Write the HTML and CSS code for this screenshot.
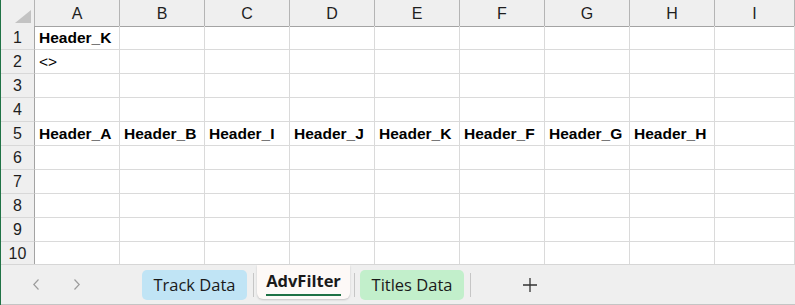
FILE: index.html
```html
<!DOCTYPE html>
<html>
<head>
  <meta http-equiv="Content-type" content="text/html; charset=utf-8">
  <title>AdvFilter</title>
  <link rel="stylesheet" href="styles.css">
</head>
<body>
  <div class="window">
    <div class="sheet">
      <div class="row head">
        <div class="corner"><span class="tri"></span></div>
        <div class="ch">A</div><div class="ch">B</div><div class="ch">C</div>
        <div class="ch">D</div><div class="ch">E</div><div class="ch">F</div>
        <div class="ch">G</div><div class="ch">H</div><div class="ch">I</div>
      </div>
      <div class="row">
        <div class="rh">1</div>
        <div class="c b">Header_K</div><div class="c"></div><div class="c"></div><div class="c"></div>
        <div class="c"></div><div class="c"></div><div class="c"></div><div class="c"></div><div class="c"></div>
      </div>
      <div class="row">
        <div class="rh">2</div>
        <div class="c">&lt;&gt;</div><div class="c"></div><div class="c"></div><div class="c"></div>
        <div class="c"></div><div class="c"></div><div class="c"></div><div class="c"></div><div class="c"></div>
      </div>
      <div class="row">
        <div class="rh">3</div>
        <div class="c"></div><div class="c"></div><div class="c"></div><div class="c"></div>
        <div class="c"></div><div class="c"></div><div class="c"></div><div class="c"></div><div class="c"></div>
      </div>
      <div class="row">
        <div class="rh">4</div>
        <div class="c"></div><div class="c"></div><div class="c"></div><div class="c"></div>
        <div class="c"></div><div class="c"></div><div class="c"></div><div class="c"></div><div class="c"></div>
      </div>
      <div class="row">
        <div class="rh">5</div>
        <div class="c b">Header_A</div><div class="c b">Header_B</div><div class="c b">Header_I</div><div class="c b">Header_J</div>
        <div class="c b">Header_K</div><div class="c b">Header_F</div><div class="c b">Header_G</div><div class="c b">Header_H</div><div class="c"></div>
      </div>
      <div class="row">
        <div class="rh">6</div>
        <div class="c"></div><div class="c"></div><div class="c"></div><div class="c"></div>
        <div class="c"></div><div class="c"></div><div class="c"></div><div class="c"></div><div class="c"></div>
      </div>
      <div class="row">
        <div class="rh">7</div>
        <div class="c"></div><div class="c"></div><div class="c"></div><div class="c"></div>
        <div class="c"></div><div class="c"></div><div class="c"></div><div class="c"></div><div class="c"></div>
      </div>
      <div class="row">
        <div class="rh">8</div>
        <div class="c"></div><div class="c"></div><div class="c"></div><div class="c"></div>
        <div class="c"></div><div class="c"></div><div class="c"></div><div class="c"></div><div class="c"></div>
      </div>
      <div class="row">
        <div class="rh">9</div>
        <div class="c"></div><div class="c"></div><div class="c"></div><div class="c"></div>
        <div class="c"></div><div class="c"></div><div class="c"></div><div class="c"></div><div class="c"></div>
      </div>
      <div class="row">
        <div class="rh">10</div>
        <div class="c"></div><div class="c"></div><div class="c"></div><div class="c"></div>
        <div class="c"></div><div class="c"></div><div class="c"></div><div class="c"></div><div class="c"></div>
      </div>
    </div>

    <div class="tabbar">
      <svg class="nav prev" width="6" height="11" viewBox="0 0 6 11">
        <polyline points="5.5,0.5 0.8,5.5 5.5,10.5" fill="none" stroke="#9c9c9c" stroke-width="1.2"/>
      </svg>
      <svg class="nav next" width="6" height="11" viewBox="0 0 6 11">
        <polyline points="0.5,0.5 5.2,5.5 0.5,10.5" fill="none" stroke="#9c9c9c" stroke-width="1.2"/>
      </svg>
      <div class="pill blue">Track Data</div>
      <span class="sep"></span>
      <div class="tab active"><span class="label">AdvFilter</span></div>
      <span class="sep"></span>
      <div class="pill green">Titles Data</div>
      <span class="sep"></span>
      <svg class="plus" width="14" height="14" viewBox="0 0 14 14">
        <path d="M7 0V14M0 7H14" stroke="#333" stroke-width="1.3" fill="none"/>
      </svg>
    </div>
  </div>
</body>
</html>
```

FILE: styles.css
```css
body {
  margin: 0;
  background-color: #ffffff;
  font-family: "Liberation Sans", Arial, sans-serif;
}
.window {
  width: 795px;
  height: 305px;
  box-sizing: border-box;
  border-left: 1px solid #217346;
  display: flex;
  flex-direction: column;
  overflow: hidden;
}
.sheet {
  height: 264px;
  overflow: hidden;
}
.row {
  display: grid;
  grid-template-columns: 34px repeat(8, 85px) 80px;
  height: 24px;
}
.row.head {
  height: 26px;
  background-color: #efefef;
}
.corner {
  box-sizing: border-box;
  border-right: 1px solid #b4b4b4;
  border-bottom: 1px solid #a3a3a3;
  display: flex;
  justify-content: flex-end;
  align-items: flex-end;
  padding: 0 3px 3px 0;
}
.tri {
  width: 16px;
  height: 13px;
  background-color: #c3c3c3;
  clip-path: polygon(100% 0, 100% 100%, 0 100%);
}
.ch {
  box-sizing: border-box;
  border-right: 1px solid #b4b4b4;
  border-bottom: 1px solid #a3a3a3;
  text-align: center;
  font-size: 16px;
  line-height: 24px;
  padding-top: 2px;
  color: #1e1e1e;
}
.rh {
  box-sizing: border-box;
  background-color: #efefef;
  border-right: 1px solid #a3a3a3;
  border-bottom: 1px solid #d8d8d8;
  text-align: center;
  font-size: 16px;
  line-height: 23px;
  color: #1e1e1e;
}
.c {
  box-sizing: border-box;
  border-right: 1px solid #dadada;
  border-bottom: 1px solid #dadada;
  font-size: 15.5px;
  line-height: 23px;
  padding-left: 4px;
  white-space: nowrap;
  color: #000;
}
.b {
  font-weight: bold;
}

.tabbar {
  height: 41px;
  box-sizing: border-box;
  border-top: 1px solid #d6d6d6;
  border-bottom: 1px solid #c4c4c4;
  background-color: #efefef;
  display: flex;
  align-items: center;
  font-family: "Open Sans", "Segoe UI", sans-serif;
  font-size: 16.5px;
  color: #1a1a1a;
}
.nav.prev {
  margin-left: 32px;
}
.nav.next {
  margin-left: 35px;
}
.pill {
  height: 30px;
  border-radius: 5px;
  display: flex;
  align-items: center;
  justify-content: center;
  box-sizing: border-box;
}
.pill.blue {
  width: 105px;
  margin-left: 62px;
  background-color: #c0e4f5;
}
.pill.green {
  width: 104px;
  margin-left: 5px;
  background-color: #c2efcb;
}
.sep {
  width: 1px;
  height: 24px;
  background-color: #c6c6c6;
  margin-left: 6px;
}
.tab.active {
  align-self: flex-start;
  width: 93px;
  height: 34px;
  margin-left: 3px;
  margin-right: -2px;
  background-color: #fdf9f7;
  border-radius: 0 0 6px 6px;
  box-shadow: 0 1px 2px rgba(0, 0, 0, 0.18);
  display: flex;
  justify-content: center;
  padding-top: 6px;
  box-sizing: border-box;
}
.tab.active .label {
  font-weight: bold;
  height: 23px;
  line-height: 20px;
  border-bottom: 2px solid #1e7145;
}
.plus {
  margin-left: 52px;
}
```
